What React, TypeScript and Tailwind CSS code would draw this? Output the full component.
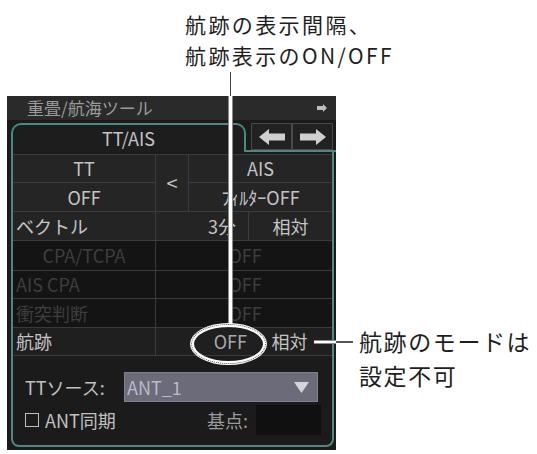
import React from 'react';

const teal = 'border-[#4a8a82]';

function ArrowLeft() {
  return (
    <svg width="26" height="16" viewBox="0 0 26 16">
      <polygon points="0,8 10,0 10,4.5 26,4.5 26,11.5 10,11.5 10,16" fill="#cfcfcf" />
    </svg>
  );
}

function ArrowRight() {
  return (
    <svg width="26" height="16" viewBox="0 0 26 16">
      <polygon points="26,8 16,0 16,4.5 0,4.5 0,11.5 16,11.5 16,16" fill="#cfcfcf" />
    </svg>
  );
}

export default function App() {
  return (
    <div className="relative w-[537px] h-[454px] overflow-hidden bg-white font-['Noto_Sans_CJK_JP','Noto_Sans',sans-serif]">
      {/* 上の説明 */}
      <div className="pl-[185px] pt-[9px] text-[21px] leading-[31px] tracking-[2.4px] text-[#1e1e1e]">
        <p>航跡の表示間隔、</p>
        <p>航跡表示のON/OFF</p>
      </div>

      {/* パネル */}
      <div className="ml-[7px] mt-[25px] w-[329px] h-[354px] bg-[#1b1b1b] flex flex-col">
        {/* タイトル */}
        <div className="h-[24px] bg-[#2a2a2a] flex items-center justify-between pl-[20px] pr-[9px] text-[17px] text-[#9a9a9a]">
          <span>重畳/航海ツール</span>
          <svg width="10" height="8" viewBox="0 0 10 8">
            <polygon points="10,4 6,0 6,2 0,2 0,6 6,6 6,8" fill="#bdbdbd" />
          </svg>
        </div>

        {/* タブ */}
        <div className="h-[32px] flex items-end">
          <div className={`ml-[4px] w-[235px] h-[29px] border-t-2 border-x-2 rounded-t-[10px] ${teal} bg-[#1d1d1d] flex items-center justify-center text-[18px] text-[#c4c4c4]`}>
            TT/AIS
          </div>
          <div className={`flex-1 h-[29px] border-b-2 ${teal} flex items-start pl-[5px]`}>
            <div className="h-[27px] w-[41px] border border-[#4a4a4a] bg-[#222] flex items-center justify-center">
              <ArrowLeft />
            </div>
            <div className="h-[27px] w-[41px] border border-[#4a4a4a] bg-[#222] flex items-center justify-center">
              <ArrowRight />
            </div>
          </div>
        </div>

        {/* 本体 */}
        <div className={`ml-[4px] mr-[2px] mb-[3px] flex-1 border-x-2 border-b-2 rounded-b-[8px] ${teal} flex flex-col text-[18px]`}>
          {/* TT / AIS */}
          <div className="flex mt-[2px] border-t border-[#3c3c3c]">
            <div className="w-[143px] flex flex-col">
              <div className="h-[28px] bg-[#252525] border-b border-r border-[#3c3c3c] flex items-center justify-center text-[#c4c4c4]">TT</div>
              <div className="h-[29px] bg-[#252525] border-b border-r border-[#3c3c3c] flex items-center justify-center text-[#c4c4c4]">OFF</div>
            </div>
            <div className="w-[33px] h-[57px] bg-[#252525] border-b border-r border-[#3c3c3c] flex items-center justify-center text-[#c4c4c4] text-[20px]">
              &lt;
            </div>
            <div className="flex-1 flex flex-col">
              <div className="h-[28px] bg-[#252525] border-b border-[#3c3c3c] flex items-center justify-center text-[#c4c4c4]">AIS</div>
              <div className="h-[29px] bg-[#252525] border-b border-[#3c3c3c] flex items-center justify-center text-[#c4c4c4]">ﾌｨﾙﾀｰOFF</div>
            </div>
          </div>

          {/* ベクトル */}
          <div className="h-[29px] flex bg-[#242424] border-b border-[#3c3c3c] text-[#c4c4c4]">
            <div className="w-[143px] border-r border-[#3c3c3c] flex items-center pl-[3px]">ベクトル</div>
            <div className="w-[93px] border-r border-[#3c3c3c] flex items-center justify-end pr-[12px]">3分</div>
            <div className="flex-1 flex items-center justify-center">相対</div>
          </div>

          {/* 無効の行 */}
          <div className="h-[30px] flex bg-[#141414] border-b border-[#3a3a3a] text-[#3e3e3e]">
            <div className="w-[143px] border-r border-[#3a3a3a] flex items-center justify-center">CPA/TCPA</div>
            <div className="flex-1 flex items-center justify-center pl-[2px]">OFF</div>
          </div>
          <div className="h-[28px] flex bg-[#141414] border-b border-[#3a3a3a] text-[#3e3e3e]">
            <div className="w-[143px] border-r border-[#3a3a3a] flex items-center pl-[3px]">AIS CPA</div>
            <div className="flex-1 flex items-center justify-center pl-[2px]">OFF</div>
          </div>
          <div className="h-[29px] flex bg-[#141414] border-b border-[#3a3a3a] text-[#3e3e3e]">
            <div className="w-[143px] border-r border-[#3a3a3a] flex items-center pl-[3px]">衝突判断</div>
            <div className="flex-1 flex items-center justify-center pl-[2px]">OFF</div>
          </div>

          {/* 航跡 */}
          <div className="h-[28px] flex bg-[#1f1f1f] border-b border-[#3c3c3c] text-[#c4c4c4]">
            <div className="w-[143px] border-r border-[#3c3c3c] flex items-center pl-[3px]">航跡</div>
            <div className="w-[93px] flex items-center justify-end pr-[2px] text-[#a8a8a8]">OFF</div>
            <div className="flex-1 flex items-center justify-center pr-[2px]">相対</div>
          </div>

          {/* 下部 */}
          <div className="flex-1 flex flex-col pl-[12px] pt-[16px] gap-[3px] text-[#c0c0c0]">
            <div className="flex items-center h-[30px]">
              <span className="w-[99px]">TTソース:</span>
              <div className="w-[194px] h-[30px] bg-[#6b6b79] border border-[#80808c] flex items-center justify-between pl-[2px] pr-[8px] text-[#babaca]">
                <span>ANT_1</span>
                <svg width="15" height="11" viewBox="0 0 15 11">
                  <polygon points="0,0 15,0 7.5,11" fill="#d4d4dc" />
                </svg>
              </div>
            </div>
            <div className="flex items-center h-[30px]">
              <span className="w-[182px] flex items-center gap-[6px]">
                <span className="w-[14px] h-[14px] border border-[#c0c0c0]" />
                ANT同期
              </span>
              <span className="w-[49px] text-[#9a9a9a]">基点:</span>
              <div className="w-[65px] h-[30px] bg-[#101010]" />
            </div>
          </div>
        </div>
      </div>

      {/* 引き出し線と強調 */}
      <div className="absolute left-[230px] top-[72px] w-[1px] h-[24px] bg-[#444]" />
      <div className="absolute left-[228px] top-[96px] w-[5px] h-[228px] bg-white border-x border-[#8a8a8a]" />
      <div className="absolute left-[190px] top-[323px] w-[77px] h-[42px] rounded-[50%] border-[4px] border-white">
        <div className="absolute inset-[-3px] rounded-[50%] border-[1.5px] border-dotted border-[#444]" />
      </div>
      <div className="absolute left-[314px] top-[340px] w-[22px] h-[4px] bg-white border-y border-[#8a8a8a]" />
      <div className="absolute left-[336px] top-[341px] w-[17px] h-[2px] bg-[#555]" />

      {/* 右の説明 */}
      <div className="absolute left-[359px] top-[324px] text-[23px] leading-[34px] tracking-[1.6px] text-[#1e1e1e]">
        <p>航跡のモードは</p>
        <p>設定不可</p>
      </div>
    </div>
  );
}
